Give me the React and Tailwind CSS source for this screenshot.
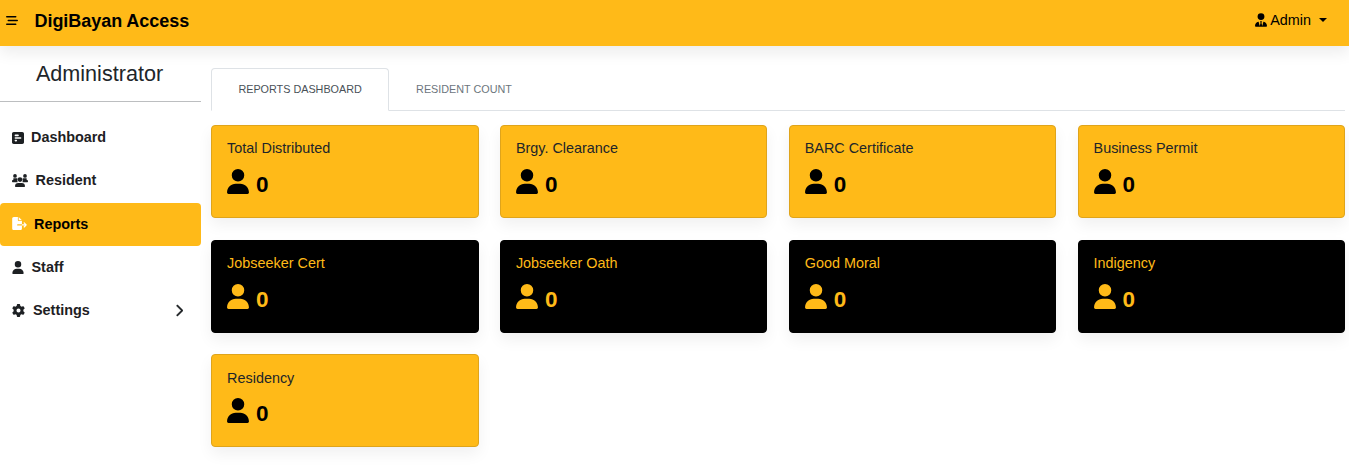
import { FaUser, FaBarsStaggered, FaUserTie, FaSquarePollHorizontal, FaFileExport, FaGear, FaChevronRight } from "react-icons/fa6";

const cards = [
  ["Total Distributed", false],
  ["Brgy. Clearance", false],
  ["BARC Certificate", false],
  ["Business Permit", false],
  ["Jobseeker Cert", true],
  ["Jobseeker Oath", true],
  ["Good Moral", true],
  ["Indigency", true],
  ["Residency", false],
];

function GroupIcon() {
  return (
    <svg viewBox="0 0 640 512" className="h-[13px] w-4" fill="currentColor">
      <circle cx="120" cy="72" r="74" />
      <circle cx="520" cy="72" r="74" />
      <circle cx="320" cy="220" r="94" />
      <path d="M0 295c0-35 15-55 55-65V170h130c20 0 30 5 40 13-15 40-7 85 0 139H26c-15 0-26-12-26-27zM420 322c7-54 15-99 0-139 10-8 20-13 40-13h125v60c40 10 55 30 55 65 0 15-11 27-26 27zM120 485c0-75 56-125 130-125h140c74 0 130 50 130 125 0 15-12 27-27 27H147c-15 0-27-12-27-27z" />
    </svg>
  );
}

function NavItem({ icon, label, gap, active, chevron }) {
  return (
    <a className={`flex h-[43.2px] items-center px-3 text-[14.4px] font-bold ${active ? "rounded bg-[#ffba18] text-black" : "text-[#1d2023]"}`}>
      <span className={`mb-px ${active ? "text-white" : ""}`}>{icon}</span>
      <span className={gap}>{label}</span>
      {chevron && <FaChevronRight className="mr-[6px] ml-auto h-[13px] w-[8px] stroke-current stroke-[16]" />}
    </a>
  );
}

function Card({ title, dark }) {
  return (
    <div className={`h-[93px] rounded-[4px] border px-[15px] shadow-[0_7px_15px_rgba(0,0,0,0.06)] ${dark ? "border-black bg-black text-[#ffba18]" : "border-[#dfa41b] bg-[#ffba18] text-black"}`}>
      <div className={`mt-[11.2px] text-[14.4px] leading-[22px] ${dark ? "" : "text-[#212529]"}`}>{title}</div>
      <div className="mt-[7.8px] flex items-center">
        <FaUser className="h-[25px] w-[22px]" />
        <span className="mt-[5px] -mb-px ml-[7px] text-[22.5px] leading-[25px] font-bold">0</span>
      </div>
    </div>
  );
}

export default function App() {
  return (
    <div className="h-[473px] overflow-hidden bg-white font-['Liberation_Sans',Arial,sans-serif] text-[#212529]">
      <header className="relative flex h-[46px] items-center bg-[#ffba18] pl-[6px] text-black shadow-[0_7px_15px_rgba(0,0,0,0.075)]">
        <FaBarsStaggered className="mb-[6px] h-[13px] w-3" />
        <span className="mb-[4px] ml-[16.5px] text-[18px] tracking-[-0.05px] font-bold">DigiBayan Access</span>
        <div className="mr-[22px] mb-[5px] ml-auto flex items-center text-[14.4px]">
          <FaUserTie className="h-[14px] w-[12px]" />
          <span className="ml-[3.5px]">Admin</span>
          <span className="ml-[8px] border-x-4 border-t-4 border-x-transparent border-t-black" />
        </div>
      </header>
      <div className="flex">
        <aside className="w-[201px] shrink-0">
          <div className="h-[56px] border-b border-[#bcbec0] pt-[12px] pr-[2px] text-center text-[21.6px] leading-[32px]">Administrator</div>
          <nav className="pt-[14.5px]">
            <NavItem icon={<FaSquarePollHorizontal className="h-[14px] w-[12px]" />} label="Dashboard" gap="ml-[7px]" />
            <NavItem icon={<GroupIcon />} label="Resident" gap="ml-[7.6px]" />
            <NavItem icon={<FaFileExport className="h-[13px] w-[15px]" />} label="Reports" gap="ml-[7px]" active />
            <NavItem icon={<FaUser className="h-[13px] w-[12px]" />} label="Staff" gap="ml-[7.5px]" />
            <NavItem icon={<FaGear className="h-[13px] w-[13px]" />} label="Settings" gap="ml-2" chevron />
          </nav>
        </aside>
        <main className="flex-1 pt-[22px] pr-1 pl-[10.1px]">
          <div className="flex h-[43px] border-b border-[#dee2e6] text-[10.8px]">
            <div className="flex h-[43px] w-[178px] items-center justify-center rounded-t-[4px] border border-b-white border-[#dee2e6] bg-white text-[#495057]">REPORTS DASHBOARD</div>
            <div className="flex items-center pl-[27px] text-[#6c757d]">RESIDENT COUNT</div>
          </div>
          <div className="grid grid-cols-4 gap-x-[21.37px] gap-y-[21.6px] pt-[14.2px]">
            {cards.map(([title, dark]) => <Card key={title} title={title} dark={dark} />)}
          </div>
        </main>
      </div>
    </div>
  );
}
